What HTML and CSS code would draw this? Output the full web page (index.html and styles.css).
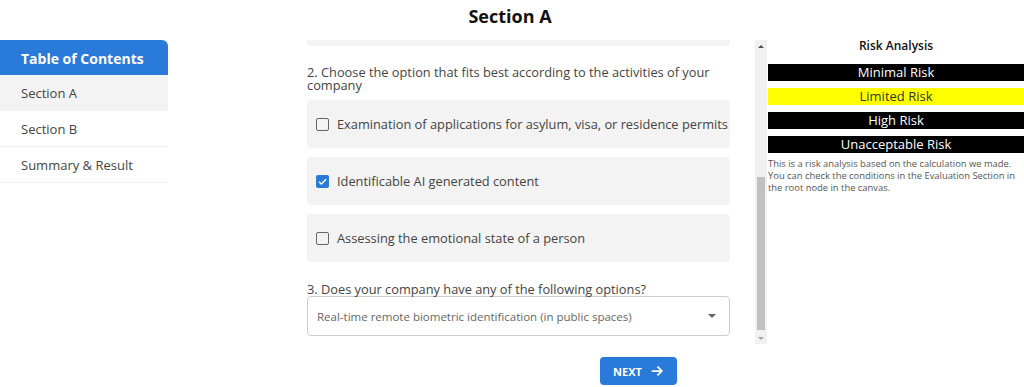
FILE: index.html
```html
<!DOCTYPE html>
<html lang="en">
<head>
    <meta charset="UTF-8">
    <meta name="viewport" content="width=device-width, initial-scale=1.0">
    <title>Section A</title>
    <link rel="stylesheet" href="styles.css">
</head>

<body>
    <h1 class="page-title">Section A</h1>
    <div class="layout">
        <nav class="toc">
            <div class="toc-head">Table of Contents</div>
            <a class="toc-item active">Section A</a>
            <a class="toc-item">Section B</a>
            <a class="toc-item">Summary &amp; Result</a>
        </nav>

        <main class="form-col">
            <div class="scroll-box">
                <div class="scroll-content">
                    <div class="prev-card"></div>

                    <p class="question">2. Choose the option that fits best according to the activities of your company</p>
                    <label class="option">
                        <span class="box"></span>
                        Examination of applications for asylum, visa, or residence permits
                    </label>
                    <label class="option">
                        <span class="box checked">
                            <svg viewBox="0 0 13 13" width="13" height="13"><path d="M3 6.7 L5.4 9 L10.1 4.2" fill="none" stroke="#fff" stroke-width="1.5"/></svg>
                        </span>
                        Identificable AI generated content
                    </label>
                    <label class="option">
                        <span class="box"></span>
                        Assessing the emotional state of a person
                    </label>

                    <p class="question q3">3. Does your company have any of the following options?</p>
                    <div class="select">
                        <span>Real-time remote biometric identification (in public spaces)</span>
                        <span class="caret"></span>
                    </div>
                </div>
                <div class="scrollbar">
                    <span class="sb-btn up"></span>
                    <div class="sb-track"><div class="sb-thumb"></div></div>
                    <span class="sb-btn down"></span>
                </div>
            </div>
            <div class="actions">
                <button class="next-btn">NEXT
                    <svg viewBox="0 0 16 16" width="14" height="14"><path d="M2 8 H13 M8.5 3 L13.5 8 L8.5 13" fill="none" stroke="#fff" stroke-width="2"/></svg>
                </button>
            </div>
        </main>

        <aside class="risk">
            <h2>Risk Analysis</h2>
            <div class="risk-bar">Minimal Risk</div>
            <div class="risk-bar current">Limited Risk</div>
            <div class="risk-bar">High Risk</div>
            <div class="risk-bar">Unacceptable Risk</div>
            <p class="risk-note">This is a risk analysis based on the calculation we made. You can check the conditions in the Evaluation Section in the root node in the canvas.</p>
        </aside>
    </div>
</body>
</html>
```

FILE: styles.css
```css
body {
    margin: 0;
    font-family: "Open Sans", "DejaVu Sans", sans-serif;
    color: #444;
    background: #fff;
    width: 1024px;
    height: 387px;
    overflow: hidden;
}

.page-title {
    margin: 0;
    height: 40px;
    line-height: 32px;
    font-size: 18px;
    font-weight: 700;
    color: #111;
    text-align: center;
    padding-right: 4px;
}

.layout {
    display: flex;
    align-items: flex-start;
}

/* left navigation */
.toc {
    width: 168px;
    flex-shrink: 0;
    display: flex;
    flex-direction: column;
}

.toc-head {
    height: 35px;
    line-height: 37px;
    background: #2a7ad9;
    color: #fff;
    font-weight: 700;
    font-size: 14px;
    padding-left: 21px;
    border-top-right-radius: 6px;
}

.toc-item {
    height: 35px;
    line-height: 37px;
    padding-left: 21px;
    font-size: 13px;
    color: #444;
    border-bottom: 1px solid #efefef;
}

.toc-item.active {
    background: #f3f3f3;
    border-bottom-color: #f3f3f3;
}

/* middle column */
.form-col {
    width: 600px;
    flex-shrink: 0;
    padding-left: 139px;
    box-sizing: border-box;
}

.scroll-box {
    display: flex;
    height: 304px;
}

.scroll-content {
    width: 423px;
    overflow: hidden;
}

.prev-card {
    height: 6px;
    background: #f3f3f3;
    border-radius: 0 0 4px 4px;
    margin-bottom: 20px;
}

.question {
    margin: 0 0 8px;
    font-size: 12.8px;
    line-height: 13px;
    color: #444;
}

.question.q3 {
    margin-top: 20px;
    margin-bottom: 0;
    line-height: 14px;
}

.option {
    display: flex;
    align-items: center;
    gap: 8px;
    height: 48px;
    padding-left: 9px;
    margin-bottom: 9px;
    background: #f3f3f3;
    border-radius: 4px;
    font-size: 12.8px;
    color: #444;
    white-space: nowrap;
}

.box {
    width: 13px;
    height: 13px;
    box-sizing: border-box;
    border: 1.5px solid #666;
    border-radius: 2px;
    flex-shrink: 0;
}

.box.checked {
    border: none;
    background: #2a7ad9;
    display: flex;
}

.select {
    height: 40px;
    box-sizing: border-box;
    border: 1px solid #ccc;
    border-radius: 4px;
    display: flex;
    align-items: center;
    justify-content: space-between;
    padding: 0 13px 0 9px;
    font-size: 11.5px;
    color: #666;
}

.caret {
    width: 0;
    height: 0;
    border-left: 4px solid transparent;
    border-right: 4px solid transparent;
    border-top: 4px solid #666;
}

/* fake classic scrollbar */
.scrollbar {
    width: 12px;
    margin-left: 25px;
    background: #f1f1f1;
    display: flex;
    flex-direction: column;
}

.sb-btn {
    height: 12px;
    display: flex;
    justify-content: center;
    align-items: center;
}

.sb-btn::before {
    content: "";
    border-left: 3px solid transparent;
    border-right: 3px solid transparent;
}

.sb-btn.up::before {
    border-bottom: 3px solid #505050;
}

.sb-btn.down::before {
    border-top: 3px solid #a3a3a3;
}

.sb-track {
    flex: 1;
    display: flex;
    flex-direction: column;
    justify-content: flex-end;
    padding: 0 2px 2px;
}

.sb-thumb {
    height: 153px;
    background: #c1c1c1;
}

.actions {
    display: flex;
    padding: 13px 0 0 293px;
}

.next-btn {
    display: flex;
    align-items: center;
    gap: 8px;
    width: 77px;
    height: 28px;
    justify-content: center;
    border: none;
    border-radius: 4px;
    background: #2a7ad9;
    color: #fff;
    font-family: inherit;
    font-weight: 700;
    font-size: 11px;
    padding: 0;
}

/* right panel */
.risk {
    flex: 1;
}

.risk h2 {
    margin: 0;
    height: 24px;
    line-height: 12px;
    font-size: 12px;
    font-weight: 600;
    color: #111;
    text-align: center;
}

.risk-bar {
    height: 17px;
    line-height: 17px;
    margin-bottom: 7px;
    background: #000;
    color: #fff;
    font-size: 13px;
    text-align: center;
}

.risk-bar.current {
    background: #ffff00;
    color: #333;
}

.risk-note {
    margin: -2px 0 0;
    font-size: 9.4px;
    line-height: 12px;
    color: #555;
    padding-right: 6px;
}
```
